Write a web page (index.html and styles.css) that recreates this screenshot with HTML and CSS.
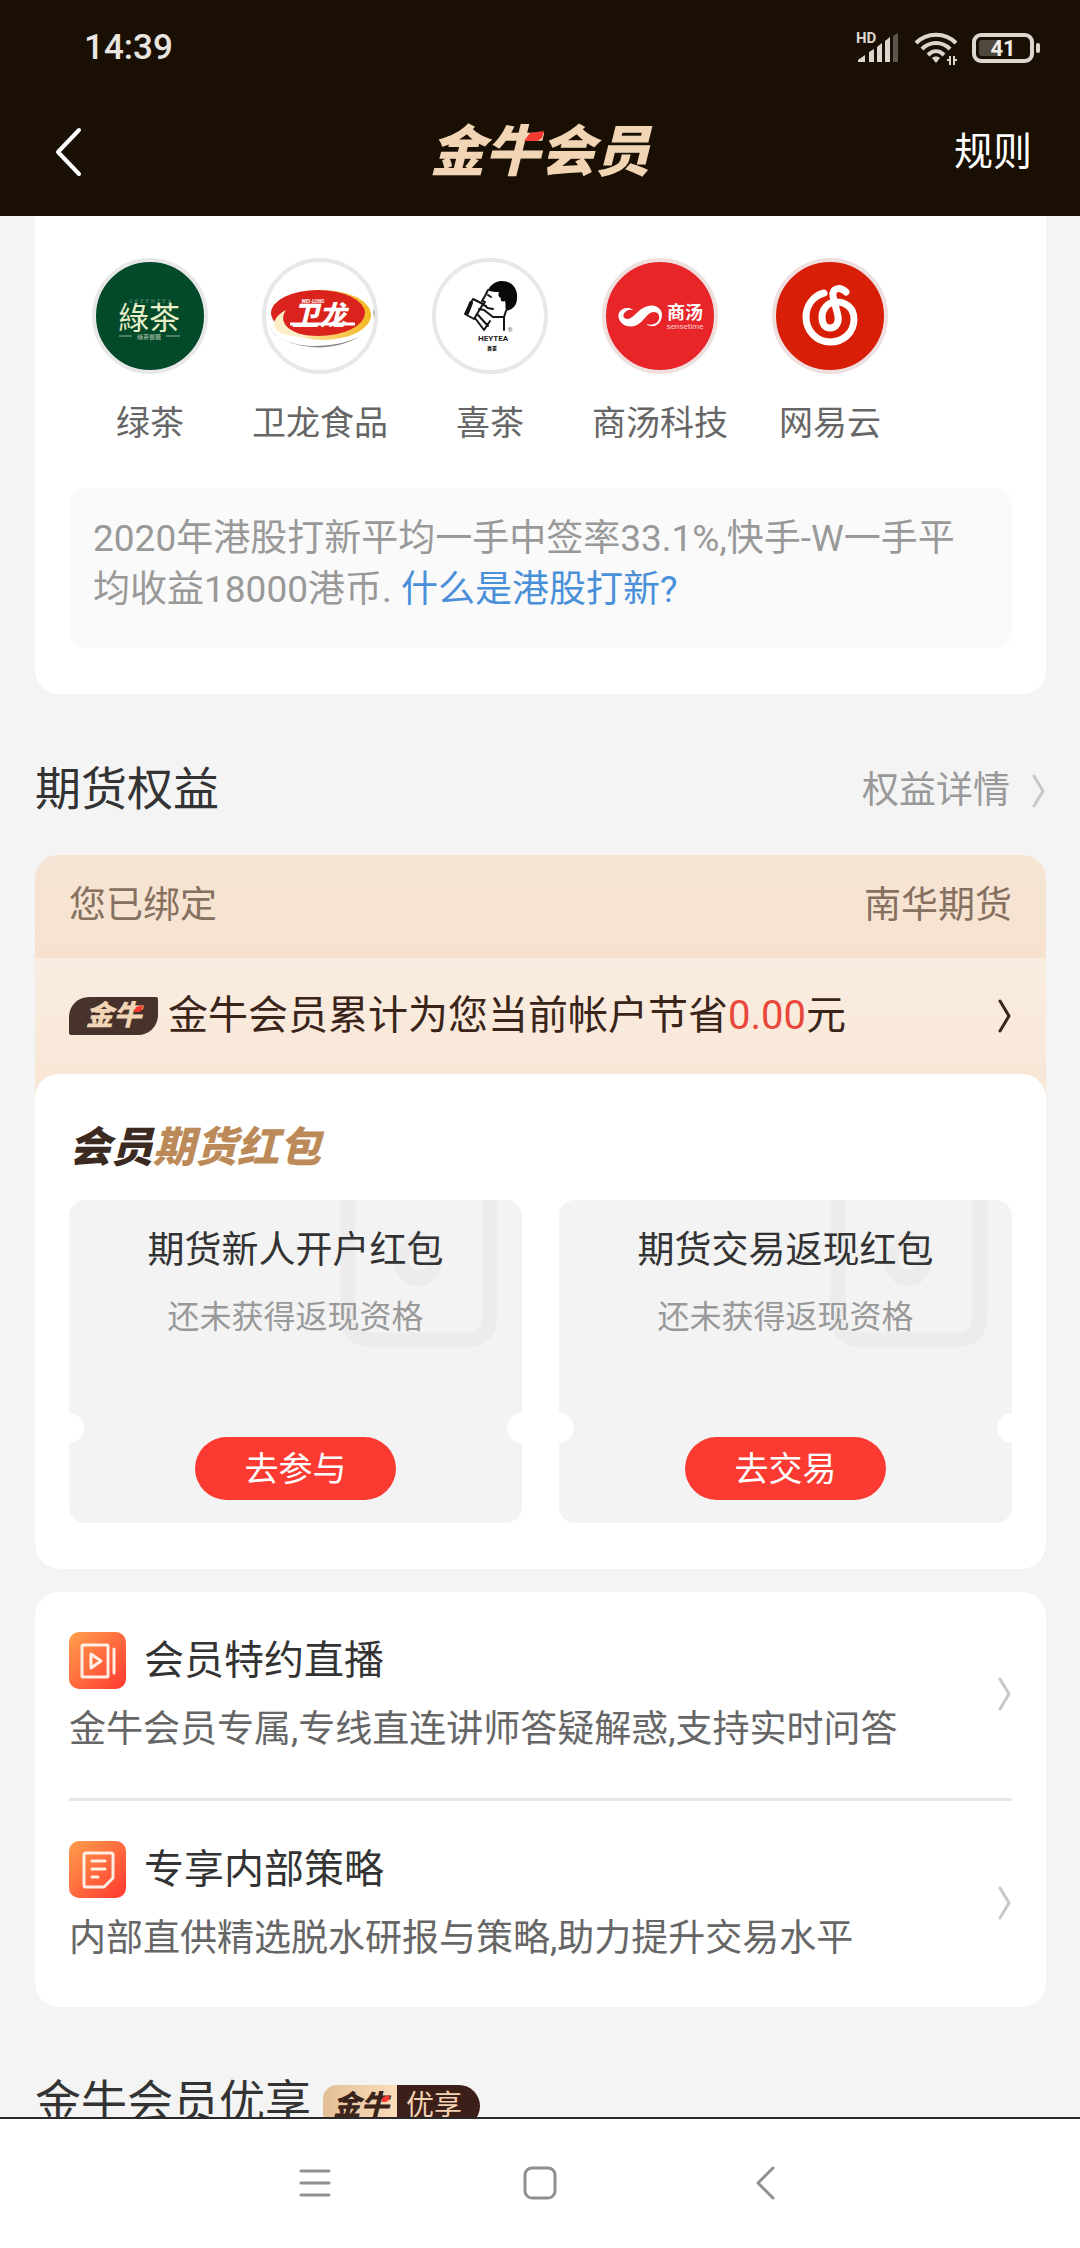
FILE: index.html
```html
<!DOCTYPE html>
<html lang="zh-CN">
<head>
    <meta charset="UTF-8">
    <meta name="viewport" content="width=device-width, initial-scale=1.0">
    <title>金牛会员</title>
    <link rel="stylesheet" href="styles.css">
</head>
<body>
    <header class="header">
        <div class="status-bar">
            <span class="time">14:39</span>
            <div class="status-icons">
                <svg class="signal" width="44" height="34" viewBox="0 0 44 34">
                    <text x="0" y="12" class="hd">HD</text>
                    <path fill="#dcd6d0" d="M2 31v-2l7-5v7zM13 31V21l5-3v13zM21 31V16l5-4v19zM29 31V10l5-4v25z"/>
                    <path fill="#5c544c" d="M37 31V5l5-3v29z"/>
                </svg>
                <svg class="wifi" width="44" height="34" viewBox="0 0 44 34">
                    <g fill="none" stroke="#dcd6d0" stroke-width="4">
                        <path d="M2 12C13 1 31 1 42 12"/>
                        <path d="M8 18c8-8 20-8 28 0"/>
                        <path d="M14 24c5-5 11-5 16 0"/>
                    </g>
                    <path fill="#dcd6d0" d="M18 27c2-2 6-2 8 0l-4 5z"/>
                    <path fill="none" stroke="#dcd6d0" stroke-width="2" d="M33 29l3 0M36 25v9M40 25v9M40 29l3 0"/>
                </svg>
                <svg class="battery" width="70" height="34" viewBox="0 0 70 34">
                    <rect x="2" y="4" width="58" height="26" rx="7" fill="none" stroke="#dcd6d0" stroke-width="4"/>
                    <rect x="7" y="9" width="20" height="16" rx="3" fill="#50483f"/>
                    <rect x="64" y="12" width="4" height="10" rx="2" fill="#dcd6d0"/>
                    <text x="31" y="25" text-anchor="middle" class="level">41</text>
                </svg>
            </div>
        </div>
        <div class="title-bar">
            <button class="back" aria-label="返回">
                <svg width="28" height="50" viewBox="0 0 28 50"><path d="M25 3L4 25l21 22" fill="none" stroke="#fff" stroke-width="4" stroke-linecap="round" stroke-linejoin="round"/></svg>
            </button>
            <h1 class="brand">金牛会员<svg class="spark" width="20" height="10" viewBox="0 0 20 10"><path d="M6 2l14-2-2 7-5 3H0z" fill="#f93a32"/></svg></h1>
            <a class="rules" href="#rules">规则</a>
        </div>
    </header>

    <main class="content">
        <section class="card ipo">
            <ul class="companies">
                <li>
                    <div class="logo logo-green">
                        <svg viewBox="4 4 108 108">
                            <text x="58" y="45" font-size="5" text-anchor="middle" fill="#5f9178">G &#160;R &#160;E &#160;E &#160;N &#160;T &#160;E &#160;A</text>
                            <text x="57" y="71" font-size="31" text-anchor="middle" fill="#e8eec6">綠茶</text>
                            <path d="M27 78h13M74 78h14" stroke="#8fb09a"/>
                            <text x="57" y="81" font-size="6" text-anchor="middle" fill="#b9cdb0">綠茶餐廳</text>
                        </svg>
                    </div>
                    <span>绿茶</span>
                </li>
                <li>
                    <div class="logo">
                        <svg viewBox="4 4 108 108">
                            <defs>
                                <linearGradient id="gold" x1="0" x2="1">
                                    <stop offset="0" stop-color="#fff"/>
                                    <stop offset="0.4" stop-color="#f9dc8a"/>
                                    <stop offset="1" stop-color="#f3b81e"/>
                                </linearGradient>
                            </defs>
                            <path d="M7 68C18 98 110 96 112 50C118 80 72 92 50 89C26 87 10 78 7 68z" fill="#85868a"/>
                            <ellipse cx="60" cy="60" rx="52" ry="27" fill="#fff"/>
                            <ellipse cx="61" cy="57" rx="48" ry="25" fill="url(#gold)"/>
                            <ellipse cx="56" cy="55" rx="47" ry="23" fill="#d9231c"/>
                            <path d="M24 52C17 62 22 74 50 79C34 80 14 77 12 68C11 61 18 55 24 52z" fill="#fbeec8"/>
                            <text x="51" y="45" font-size="5" font-weight="700" font-style="italic" text-anchor="middle" fill="#fff">WEI-LONG</text>
                            <text x="57" y="67" font-size="27" font-weight="900" font-style="italic" text-anchor="middle" fill="#fff">卫龙</text>
                            <path d="M28 66h65" stroke="#fff" stroke-width="3"/>
                        </svg>
                    </div>
                    <span>卫龙食品</span>
                </li>
                <li>
                    <div class="logo">
                        <svg viewBox="4 4 108 108">
                            <path d="M56 32C60 24 67 23 70 23C80 23 86 31 85 40C85 48 80 52 74 53C73 50 74 46 73 43C70 44 68 43 69 40C66 39 66 36 67 34C63 34 59 34 56 32z" fill="#0b0809"/>
                            <g fill="none" stroke="#161314" stroke-width="2" stroke-linejoin="round" stroke-linecap="round">
                                <path d="M56 32L53 38L50 43L53 44L51 47L54 48C54 51 58 50 61 51"/>
                                <path d="M56 37l3 2"/>
                                <path d="M41 41L51 46L42 61L33 56z"/>
                                <path d="M39 45L35 55" stroke-width="4"/>
                                <path d="M43 60L52 72L58 63M47 51L52 52L61 59H72L74 53M72 59V72M46 57l10 11"/>
                            </g>
                            <text x="78" y="74" font-size="6" text-anchor="middle" fill="#555">®</text>
                            <text x="61" y="83" font-size="8" font-weight="700" text-anchor="middle" fill="#222">HEYTEA</text>
                            <text x="60" y="92" font-size="5" font-weight="900" text-anchor="middle" fill="#222">喜茶</text>
                        </svg>
                    </div>
                    <span>喜茶</span>
                </li>
                <li>
                    <div class="logo logo-sense">
                        <svg viewBox="4 4 108 108">
                            <path d="M32 52C22 46 14 54 17 61C20 69 31 71 38 65C45 59 46 54 52 54C59 54 59 64 52 66C50 67 47 67 44 66C51 71 59 67 60 58C61 49 50 44 41 50C34 54 31 61 25 61C18 60 22 50 32 52z" fill="#fff"/>
                            <text x="83" y="61" font-size="18" font-weight="700" text-anchor="middle" fill="#fff">商汤</text>
                            <text x="83" y="71" font-size="8" text-anchor="middle" fill="#fbd0d0">sensetime</text>
                        </svg>
                    </div>
                    <span>商汤科技</span>
                </li>
                <li>
                    <div class="logo logo-music">
                        <svg viewBox="4 4 108 108">
                            <path d="M52 35C40 38 34 49 34 59C34 73 45 84 58 84C72 84 82 74 82 61C82 50 74 44 64 44C55 44 50 52 50 59C50 66 53 70 58 70C64 70 67 65 66 58L61 38C60 30 68 28 74 34" fill="none" stroke="#fff" stroke-width="7" stroke-linecap="round"/>
                        </svg>
                    </div>
                    <span>网易云</span>
                </li>
            </ul>
            <p class="note">2020年港股打新平均一手中签率33.1%,快手-W一手平均收益18000港币. <a href="#ipo">什么是港股打新?</a></p>
        </section>

        <div class="section-head">
            <h2>期货权益</h2>
            <a class="more" href="#detail">权益详情
                <svg class="chevron" width="14" height="34" viewBox="0 0 14 34"><path d="M2 2l9 15-9 15"/></svg>
            </a>
        </div>

        <section class="futures">
            <div class="bound">
                <span>您已绑定</span>
                <span>南华期货</span>
            </div>
            <a class="saving" href="#saving">
                <span class="tag">金牛<svg class="spark" width="9" height="7" viewBox="0 0 9 7"><path d="M2 2l7-2-1 5-3 2H0z" fill="#f93a32"/></svg></span>
                <span class="saving-text">金牛会员累计为您当前帐户节省<em>0.00</em>元</span>
                <svg class="chevron chevron-dark" width="14" height="34" viewBox="0 0 14 34"><path d="M2 2l9 15-9 15"/></svg>
            </a>
            <div class="card packets">
                <h3>会员<span>期货红包</span></h3>
                <div class="coupons">
                    <div class="coupon">
                        <svg class="watermark" width="158" height="148" viewBox="0 0 158 148">
                            <path d="M8 -10V115Q8 140 33 140H125Q150 140 150 115V-10" fill="none" stroke="#ececec" stroke-width="15"/>
                            <path d="M78 27C84 37 102 45 102 62a24 24 0 0 1-48 0C54 45 72 37 78 27zM78 50a10 10 0 1 0 1 0z" fill="#ececec" fill-rule="evenodd"/>
                        </svg>
                        <h4>期货新人开户红包</h4>
                        <p>还未获得返现资格</p>
                        <button>去参与</button>
                    </div>
                    <div class="coupon">
                        <svg class="watermark" width="158" height="148" viewBox="0 0 158 148">
                            <path d="M8 -10V115Q8 140 33 140H125Q150 140 150 115V-10" fill="none" stroke="#ececec" stroke-width="15"/>
                            <path d="M78 27C84 37 102 45 102 62a24 24 0 0 1-48 0C54 45 72 37 78 27zM78 50a10 10 0 1 0 1 0z" fill="#ececec" fill-rule="evenodd"/>
                        </svg>
                        <h4>期货交易返现红包</h4>
                        <p>还未获得返现资格</p>
                        <button>去交易</button>
                    </div>
                </div>
            </div>
        </section>

        <section class="card services">
            <a class="service" href="#live">
                <div class="service-body">
                    <div class="service-title">
                        <svg width="57" height="57" viewBox="0 0 57 57">
                            <defs>
                                <linearGradient id="orange" x1="0" y1="0" x2="1" y2="1">
                                    <stop offset="0" stop-color="#ff9f4c"/>
                                    <stop offset="1" stop-color="#ff3830"/>
                                </linearGradient>
                            </defs>
                            <rect width="57" height="57" rx="10" fill="url(#orange)"/>
                            <g fill="none" stroke="#ffeee4" stroke-width="3" stroke-linejoin="round" stroke-linecap="round">
                                <rect x="13" y="13" width="26" height="32" rx="1"/>
                                <path d="M45 17v24M22 22v14l10-7z"/>
                            </g>
                        </svg>
                        <h3>会员特约直播</h3>
                    </div>
                    <p>金牛会员专属,专线直连讲师答疑解惑,支持实时问答</p>
                </div>
                <svg class="chevron" width="14" height="34" viewBox="0 0 14 34"><path d="M2 2l9 15-9 15"/></svg>
            </a>
            <a class="service" href="#strategy">
                <div class="service-body">
                    <div class="service-title">
                        <svg width="57" height="57" viewBox="0 0 57 57">
                            <rect width="57" height="57" rx="10" fill="url(#orange)"/>
                            <g fill="none" stroke="#ffeee4" stroke-width="3" stroke-linejoin="round" stroke-linecap="round">
                                <path d="M17 12H42Q44 12 44 14V37L35 46H17Q15 46 15 44V14Q15 12 17 12z"/>
                                <path d="M23 20h13M23 28h13M23 36h6"/>
                            </g>
                        </svg>
                        <h3>专享内部策略</h3>
                    </div>
                    <p>内部直供精选脱水研报与策略,助力提升交易水平</p>
                </div>
                <svg class="chevron" width="14" height="34" viewBox="0 0 14 34"><path d="M2 2l9 15-9 15"/></svg>
            </a>
        </section>

        <div class="section-head section-perks">
            <h2>金牛会员优享</h2>
            <span class="perk">
                <span class="perk-brand">金牛<svg class="spark" width="9" height="7" viewBox="0 0 9 7"><path d="M2 2l7-2-1 5-3 2H0z" fill="#f93a32"/></svg></span>
                <span class="perk-label">优享</span>
            </span>
        </div>
    </main>

    <nav class="nav-bar">
        <button aria-label="菜单">
            <svg width="36" height="36" viewBox="0 0 36 36"><path d="M4 6h28M4 18h28M4 30h28"/></svg>
        </button>
        <button aria-label="主页">
            <svg width="36" height="36" viewBox="0 0 36 36"><rect x="3" y="3" width="30" height="30" rx="7"/></svg>
        </button>
        <button aria-label="后退">
            <svg width="36" height="36" viewBox="0 0 36 36"><path d="M26 3L11 18l15 15"/></svg>
        </button>
    </nav>
</body>
</html>
```
FILE: styles.css
```css
:root {
    --dark: #1a0f03;
    --page: #f4f4f4;
    --gold: #f1d5b5;
    --brown: #3b2419;
    --red: #fb3b32;
    --text: #333;
    --subtext: #666;
    --muted: #999;
}

* {
    box-sizing: border-box;
}

html, body {
    height: 100%;
    margin: 0;
    padding: 0;
}

body {
    font-family: Roboto, "Noto Sans CJK SC", sans-serif;
    font-size: 37px;
    line-height: 50px;
    color: var(--text);
    background-color: var(--page);
    display: flex;
    flex-direction: column;
}

h1, h2, h3, h4, p, ul {
    margin: 0;
    padding: 0;
    font-weight: 400;
}

a {
    color: inherit;
    text-decoration: none;
}

button {
    border: none;
    padding: 0;
    background: none;
    font-family: inherit;
    cursor: pointer;
}

svg {
    display: block;
    flex-shrink: 0;
}

.header {
    flex-shrink: 0;
    background-color: var(--dark);
    color: #fff;
    padding-bottom: 8px;
}

.status-bar {
    height: 96px;
    padding: 0 38px 0 84px;
    display: flex;
    align-items: center;
    justify-content: space-between;
}

.time {
    font-size: 35px;
    font-weight: 500;
    color: #e9e5e1;
}

.status-icons {
    display: flex;
    gap: 14px;
}

.signal {
    overflow: visible;
}

.hd {
    font-size: 15px;
    font-weight: 700;
    fill: #dcd6d0;
}

.level {
    font-size: 22px;
    font-weight: 700;
    fill: #efebe6;
}

.title-bar {
    height: 112px;
    padding: 0 48px;
    display: grid;
    grid-template-columns: 1fr auto 1fr;
    align-items: center;
}

.back {
    justify-self: start;
    padding-left: 6px;
}

.brand {
    position: relative;
    font-size: 55px;
    line-height: 60px;
    font-weight: 900;
    font-style: italic;
    color: var(--gold);
}

.spark {
    position: absolute;
}

.brand .spark {
    left: 94px;
    top: 9px;
}

.rules {
    justify-self: end;
    font-size: 39px;
}

.content {
    flex: 1;
    min-height: 0;
    overflow: hidden;
    padding: 0 34px 0 35px;
}

.card {
    background-color: #fff;
    border-radius: 24px;
    padding: 0 34px;
}

.ipo {
    border-radius: 0 0 24px 24px;
    padding-top: 42px;
    padding-bottom: 46px;
}

.companies {
    list-style: none;
    display: grid;
    grid-template-columns: repeat(5, 170px);
    margin-left: -4px;
}

.companies li {
    display: flex;
    flex-direction: column;
    align-items: center;
    gap: 24px;
    font-size: 34px;
    color: var(--subtext);
}

.logo {
    width: 116px;
    height: 116px;
    border: 4px solid #e8e8e8;
    border-radius: 50%;
    background-color: #fff;
}

.logo svg {
    width: 100%;
    overflow: visible;
}

.logo-green {
    background-color: #034a2b;
}

.logo-sense {
    background-color: #e82529;
    border-color: #efdfdf;
}

.logo-music {
    background-color: #d81e06;
    border-color: #efdfdf;
}

.note {
    margin-top: 40px;
    padding: 25px 24px 33px;
    border-radius: 16px;
    background-color: #fafafa;
    line-height: 51px;
    color: var(--muted);
}

.note a {
    color: #4a90d9;
}

.section-head {
    margin: 65px 0 36px;
    display: flex;
    align-items: center;
    justify-content: space-between;
}

.section-head h2 {
    font-size: 46px;
    line-height: 60px;
}

.more {
    display: flex;
    align-items: center;
    gap: 22px;
    padding-top: 4px;
    color: var(--muted);
}

.chevron {
    fill: none;
    stroke: #c8c8c8;
    stroke-width: 3;
    stroke-linecap: round;
    stroke-linejoin: round;
}

.chevron-dark {
    stroke: var(--brown);
}

.futures {
    border-radius: 24px;
    background-color: #f8e7d7;
    overflow: hidden;
}

.bound {
    display: flex;
    justify-content: space-between;
    padding: 26px 34px 27px;
    background-image: linear-gradient(#f6e4d5, #f6e2ce);
    color: #86705f;
}

.saving {
    display: flex;
    align-items: center;
    gap: 10px;
    padding: 31px 34px;
    background-image: linear-gradient(#f9ede1, #f8e7d7);
    font-size: 40px;
    line-height: 54px;
    color: var(--brown);
}

.saving em {
    font-style: normal;
    color: #e9473b;
}

.saving-text {
    flex: 1;
}

.tag {
    position: relative;
    width: 89px;
    height: 38px;
    border-radius: 20px 2px 20px 2px;
    background-color: #48322c;
    color: var(--gold);
    font-size: 28px;
    line-height: 38px;
    font-weight: 900;
    font-style: italic;
    text-align: center;
}

.tag .spark {
    right: 15px;
    top: 8px;
}

.packets {
    padding-top: 47px;
    padding-bottom: 46px;
}

.packets h3 {
    font-size: 42px;
    line-height: 54px;
    font-weight: 900;
    font-style: italic;
    color: #3b2a20;
}

.packets h3 span {
    color: #bc8a58;
}

.coupons {
    display: grid;
    grid-template-columns: 1fr 1fr;
    gap: 37px;
    margin-top: 25px;
}

.coupon {
    position: relative;
    overflow: hidden;
    display: flex;
    flex-direction: column;
    align-items: center;
    padding: 26px 0 23px;
    border-radius: 16px;
    background-color: #f3f3f3;
}

/* ticket notches */
.coupon::before,
.coupon::after {
    content: "";
    position: absolute;
    top: 213px;
    width: 30px;
    height: 30px;
    border-radius: 50%;
    background-color: #fff;
}

.coupon::before {
    left: -15px;
}

.coupon::after {
    right: -15px;
}

.watermark {
    position: absolute;
    top: 0;
    right: 24px;
}

.coupon h4,
.coupon p {
    position: relative;
}

.coupon h4 {
    font-size: 37px;
}

.coupon p {
    margin-top: 16px;
    font-size: 32px;
    color: var(--muted);
}

.coupon button {
    margin-top: 95px;
    width: 201px;
    height: 63px;
    padding-bottom: 4px;
    border-radius: 32px;
    background-color: var(--red);
    color: #fff;
    font-size: 34px;
}

.services {
    margin-top: 23px;
}

.service {
    display: flex;
    align-items: center;
    justify-content: space-between;
    padding: 40px 0 43px;
}

.service + .service {
    border-top: 3px solid #e6e6e6;
}

.service-title {
    display: flex;
    align-items: center;
    gap: 18px;
}

.service-title h3 {
    font-size: 40px;
}

.service p {
    margin-top: 16px;
    color: var(--subtext);
}

.section-perks {
    justify-content: flex-start;
    gap: 12px;
}

.perk {
    display: flex;
    height: 42px;
    margin-top: 8px;
    border-radius: 14px 21px 21px 14px;
    overflow: hidden;
    font-size: 28px;
    line-height: 42px;
}

.perk-brand {
    position: relative;
    padding: 0 8px 0 10px;
    background-image: linear-gradient(90deg, #e3bf98, #fbdcb9);
    color: var(--brown);
    font-weight: 900;
    font-style: italic;
}

.perk-brand .spark {
    right: 7px;
    top: 10px;
}

.perk-label {
    padding: 0 18px 0 9px;
    background-color: #3c1f18;
    color: #f3d3b2;
}

.nav-bar {
    flex-shrink: 0;
    height: 131px;
    padding-bottom: 2px;
    border-top: 2px solid #2c292c;
    background-color: #fff;
    display: flex;
    align-items: center;
    justify-content: center;
    gap: 165px;
}

.nav-bar button {
    width: 60px;
    height: 60px;
    display: flex;
    align-items: center;
    justify-content: center;
}

.nav-bar svg {
    fill: none;
    stroke: #8f8f8f;
    stroke-width: 3;
    stroke-linecap: round;
    stroke-linejoin: round;
}
```
